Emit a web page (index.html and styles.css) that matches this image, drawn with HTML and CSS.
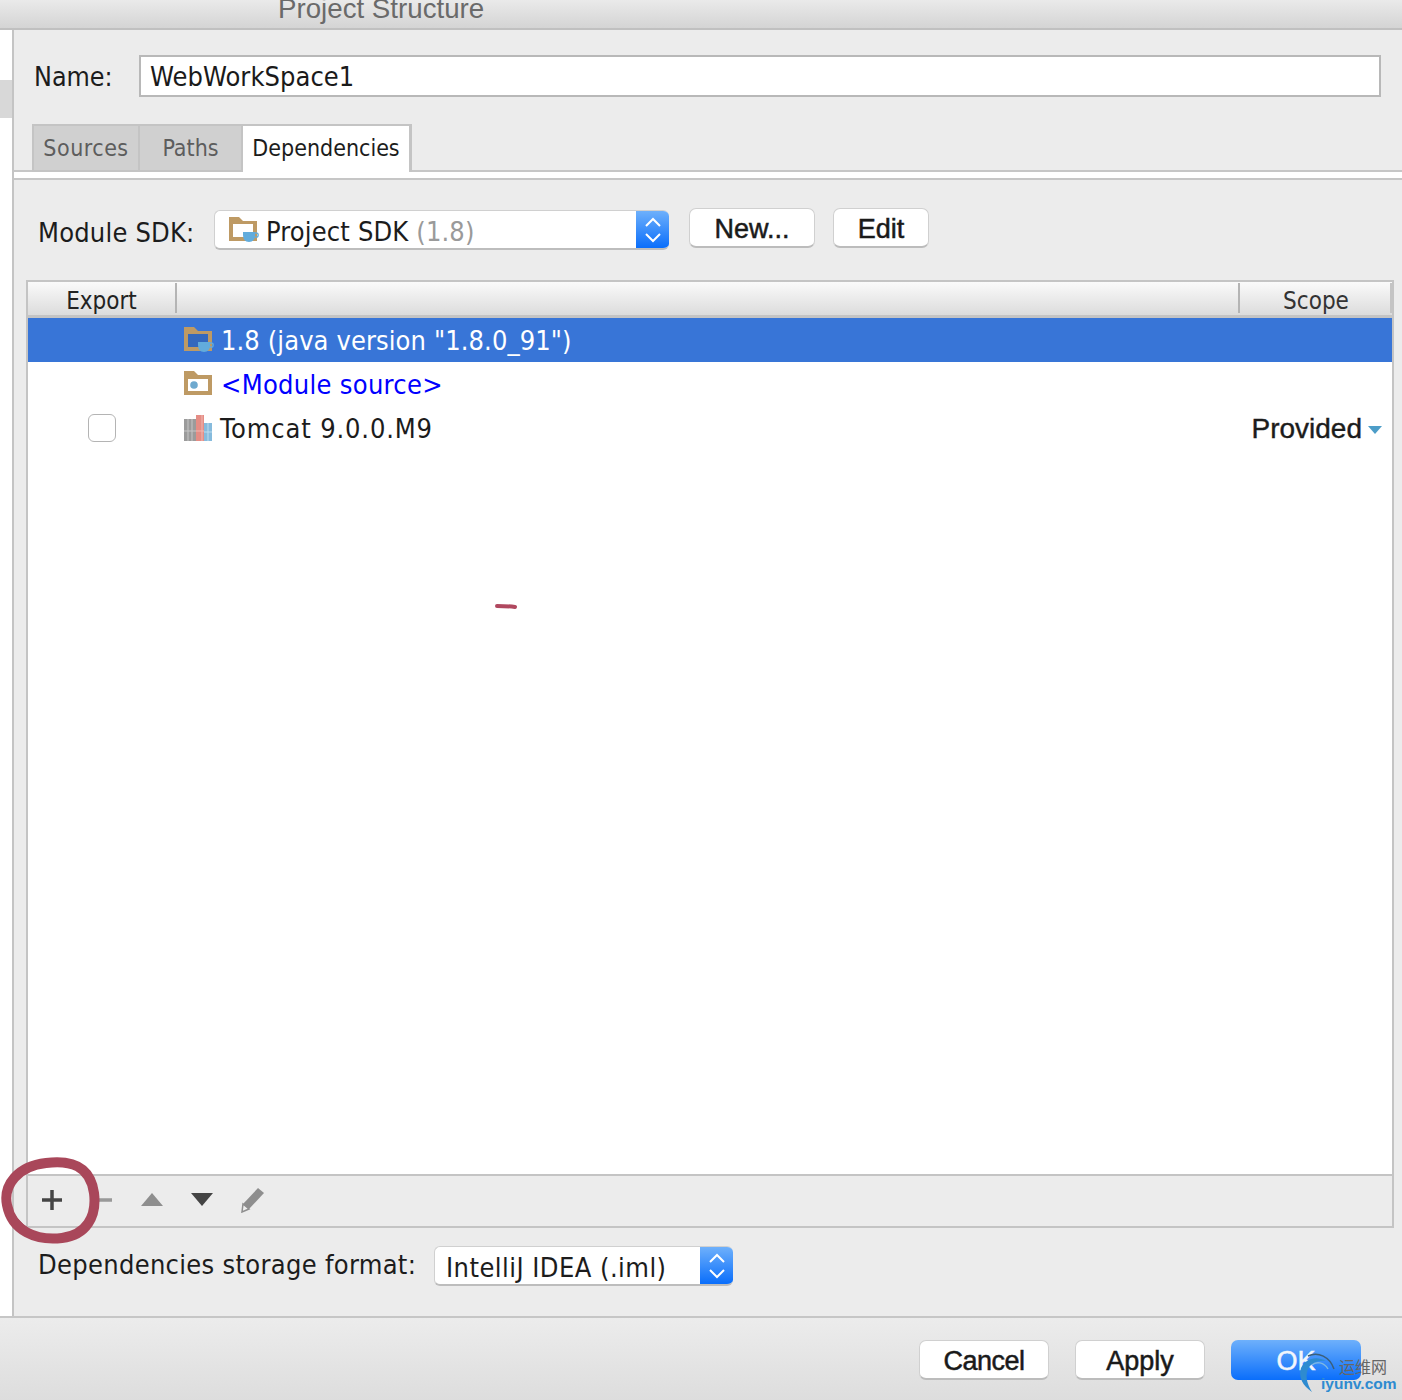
FILE: index.html
```html
<!DOCTYPE html>
<html lang="en">
<head>
<meta charset="utf-8">
<title>Project Structure</title>
<link rel="stylesheet" href="styles.css">
</head>
<body>
<div class="window">
  <header class="titlebar"><span class="title">Project Structure</span></header>
  <div class="main">
    <aside class="sidebar"><div class="side-item"></div></aside>
    <section class="content">
      <div class="name-row">
        <label class="name-label">Name:</label>
        <div class="name-input">WebWorkSpace1</div>
      </div>
      <div class="tabbar">
        <div class="tab tab-sources">Sources</div>
        <div class="tab tab-paths">Paths</div>
        <div class="tab tab-active">Dependencies</div>
      </div>
      <div class="tabstrip"></div>
      <div class="sdk-row">
        <span class="sdk-label">Module SDK:</span>
        <div class="select select-sdk">
          <svg class="sdk-icon" width="30" height="26" viewBox="0 0 30 26"><path d="M0 0h10l4 4h14v20H0z" fill="#BE9A64"/><rect x="4" y="7" width="20" height="13" fill="#fff"/><path d="M14 15h12v3q0 7-6 7t-6-7z" fill="#62ACDC"/><circle cx="27" cy="18" r="2.200" fill="none" stroke="#62ACDC" stroke-width="1.300"/></svg>
          <span class="select-text select-text-sdk">Project SDK <span class="muted">(1.8)</span></span>
          <span class="stepper"><svg width="16" height="28" viewBox="0 0 16 28"><path d="M1 10l7-7 7 7M1 18l7 7 7-7" fill="none" stroke="#fff" stroke-width="2"/></svg></span>
        </div>
        <button class="btn btn-new">New...</button>
        <button class="btn btn-edit">Edit</button>
      </div>
      <div class="table">
        <div class="thead">
          <div class="th th-export">Export</div>
          <div class="th th-fill"></div>
          <div class="th th-scope">Scope</div>
        </div>
        <div class="tbody">
          <div class="row row-selected">
            <div class="cell-export"></div>
            <svg class="row-icon" width="30" height="26" viewBox="0 0 30 26"><path d="M0 0h10l4 4h14v20H0z" fill="#BE9A64"/><rect x="4" y="7" width="20" height="13" fill="#3368BE"/><path d="M14 15h12v3q0 7-6 7t-6-7z" fill="#62ACDC"/><circle cx="27" cy="18" r="2.200" fill="none" stroke="#62ACDC" stroke-width="1.300"/></svg>
            <span class="row-text row-text-jdk">1.8 (java version "1.8.0_91")</span>
          </div>
          <div class="row">
            <div class="cell-export"></div>
            <svg class="row-icon" width="30" height="26" viewBox="0 0 30 26"><path d="M0 0h10l4 4h14v20H0z" fill="#BE9A64"/><rect x="4" y="8" width="20" height="12" fill="#fff"/><circle cx="10" cy="14" r="3.800" fill="#6EA9CF"/></svg>
            <span class="row-text link">&lt;Module source&gt;</span>
          </div>
          <div class="row">
            <div class="cell-export"><span class="checkbox"></span></div>
            <svg class="row-icon" width="30" height="26" viewBox="0 0 30 26"><rect x="0" y="4" width="12" height="22" fill="#9B9B9B"/><path d="M4 4v22M8 4v22M0 16h12" stroke="#C6C6C6" stroke-width="1"/><rect x="12" y="0" width="8" height="26" fill="#E58D85"/><path d="M18 0v26M12 16h8" stroke="#F0B8B2" stroke-width="1"/><rect x="20" y="8" width="8" height="18" fill="#86BBDD"/><path d="M24 8v18M20 17h8" stroke="#BCDCEF" stroke-width="1"/></svg>
            <span class="row-text row-text-tomcat">Tomcat 9.0.0.M9</span>
            <span class="scope-value">Provided<svg class="scope-caret" width="14" height="8" viewBox="0 0 14 8"><path d="M0 0h14L7 8z" fill="#4C9DC8"/></svg></span>
          </div>
        </div>
        <div class="toolbar">
          <span class="tool"><svg width="22" height="22" viewBox="0 0 22 22"><path d="M11 1v20M1 11h20" stroke="#444" stroke-width="3.500"/></svg></span>
          <span class="tool"><svg width="22" height="22" viewBox="0 0 22 22"><path d="M1 11h20" stroke="#999" stroke-width="3.500"/></svg></span>
          <span class="tool"><svg width="22" height="14" viewBox="0 0 22 14"><path d="M11 0l11 13H0z" fill="#8e8e8e"/></svg></span>
          <span class="tool"><svg width="22" height="14" viewBox="0 0 22 14"><path d="M0 0h22L11 13z" fill="#444"/></svg></span>
          <span class="tool"><svg width="26" height="26" viewBox="0 0 26 26"><path d="M19 1l6 5-15 16-7 2 1-7z" fill="#8e8e8e"/><path d="M4 17l6 5-7 3z" fill="#eee" stroke="#8e8e8e" stroke-width="1.500"/></svg></span>
        </div>
      </div>
      <div class="format-row">
        <span class="format-label">Dependencies storage format:</span>
        <div class="select select-format">
          <span class="select-text select-text-format">IntelliJ IDEA (.iml)</span>
          <span class="stepper"><svg width="16" height="28" viewBox="0 0 16 28"><path d="M1 10l7-7 7 7M1 18l7 7 7-7" fill="none" stroke="#fff" stroke-width="2"/></svg></span>
        </div>
      </div>
    </section>
  </div>
  <footer class="footer">
    <button class="btn btn-footer btn-cancel">Cancel</button>
    <button class="btn btn-footer">Apply</button>
    <button class="btn btn-footer btn-primary">OK</button>
  </footer>

  <svg class="annotation-circle" width="106" height="90" viewBox="0 0 106 90"><path d="M46 6C70 3 90 8 94 36c3 24-8 42-32 45C36 84 12 74 7 48 3 28 18 9 46 6z" fill="none" stroke="#A9475A" stroke-width="10"/><path d="M12 58c8 12 20 20 34 24" fill="none" stroke="#A9475A" stroke-width="5"/></svg>
  <svg class="annotation-dash" width="22" height="8" viewBox="0 0 22 8"><path d="M2 3c6 0 12 0 18 1" stroke="#B0485F" stroke-width="4" stroke-linecap="round" fill="none"/></svg>
  <div class="watermark">
    <svg class="wm-swirl" width="40" height="42" viewBox="0 0 40 42"><path d="M36 17C32 5 20-1 10 4" fill="none" stroke="#3b5f7a" stroke-width="1.500"/><path d="M28 9C18 3 7 7 3 16c-3 9 2 18 11 24C9 32 7 24 10 17c3-6 10-9 18-8z" fill="#2E8BD0"/><path d="M30 17C26 10 18 9 14 13" fill="none" stroke="#7DB8E3" stroke-width="1.500"/></svg>
    <span class="wm-cn">运维网</span>
    <span class="wm-en">iyunv.com</span>
  </div>
</div>
</body>
</html>
```

FILE: styles.css
```css
* { box-sizing: border-box; }
html, body { margin: 0; padding: 0; }
body { font-family: "DejaVu Sans", "Open Sans", sans-serif; font-stretch: condensed; color: #1c1c1c; background: #ececec; }

.window { position: relative; width: 1402px; height: 1400px; overflow: hidden; display: flex; flex-direction: column; background: #ececec; }

.titlebar { height: 30px; flex: none; padding-left: 278px; overflow: hidden; border-bottom: 2px solid #c0c0c0; background: linear-gradient(#eaeaea, #d4d4d4); }
.title { display: block; margin-top: -9px; font: 27.700px/36px "Liberation Sans", sans-serif; color: #6a6a6a; }

.main { flex: 1; display: flex; min-height: 0; }
.sidebar { width: 14px; flex: none; background: #fff; border-right: 2px solid #c4c4c4; padding-top: 50px; }
.side-item { height: 38px; background: #d8d8d8; }

.content { flex: 1; min-width: 0; display: flex; flex-direction: column; }

.name-row { display: flex; align-items: center; margin: 25px 21px 0 20px; height: 42px; }
.name-label { width: 105px; flex: none; font-size: 26.600px; }
.name-input { flex: 1; height: 42px; border: 2px solid #b8b8b8; background: #fff; padding-left: 9px; font-size: 27px; line-height: 39px; letter-spacing: 0.050px; color: #1a1a1a; }

.tabbar { display: flex; margin-top: 27px; padding-left: 18px; height: 48px; border-bottom: 2px solid #c6c6c6; }
.tab { height: 48px; font-size: 23px; line-height: 44px; text-align: center; color: #5d5d5d; background: #d0d0d0; border: 2px solid #c4c4c4; border-right-width: 0; }
.tab-sources { width: 106px; letter-spacing: 0.500px; }
.tab-paths { width: 103px; }
.tab-active { width: 171px; color: #1c1c1c; background: #fff; border-bottom: 0; border-right-width: 3px; height: 48px; }
.tabstrip { height: 8px; flex: none; background: #fff; border-bottom: 2px solid #c6c6c6; }

.sdk-row { display: flex; align-items: flex-start; margin: 28px 0 0 24px; height: 42px; }
.sdk-label { width: 176px; flex: none; margin-top: 5px; font-size: 27px; letter-spacing: 0.200px; line-height: 40px; }
.select { position: relative; display: flex; align-items: center; height: 40px; background: #fff; border-radius: 6px; border: 1px solid #d0d0d0; border-right: 0; border-bottom: 2px solid #bdbdbd; overflow: hidden; }
.select-sdk { width: 455px; margin-top: 2px; padding-left: 14px; }
.select-format { width: 299px; padding-left: 11px; }
.select-text { font-size: 27px; white-space: nowrap; padding-top: 3px; }
.select-text-sdk { letter-spacing: 0.150px; }
.select-text-format { letter-spacing: 0.450px; }
.muted { color: #9a9a9a; }
.sdk-icon { flex: none; margin-right: 7px; }
.stepper { position: absolute; top: 0; right: 0; bottom: 0; width: 33px; display: flex; align-items: center; justify-content: center; background: linear-gradient(#6eb0fb, #0a6efb); }

.btn { height: 40px; border: 1px solid #d0d0d0; border-bottom: 2px solid #bcbcbc; border-radius: 7px; background: #fff; color: #1a1a1a; font: 27px/1 "Liberation Sans", sans-serif; -webkit-text-stroke: 0.500px #1a1a1a; padding: 3px 0 0; }
.btn-new { width: 126px; margin-left: 20px; }
.btn-edit { width: 96px; margin-left: 18px; }
.btn-cancel { letter-spacing: -0.500px; }

.table { flex: 1; min-height: 0; margin: 30px 8px 0 12px; display: flex; flex-direction: column; border: 2px solid #c4c4c4; background: #fff; }
.thead { display: flex; flex: none; height: 36px; border-bottom: 3px solid #c4c4c4; background: linear-gradient(#fafafa, #dcdcdc); }
.th { font-size: 24px; line-height: 37px; text-align: center; height: 30px; margin-top: 1px; color: #222; }
.th-export { width: 149px; border-right: 2px solid #b4b4b4; }
.th-fill { flex: 1; border-right: 2px solid #b4b4b4; }
.th-scope { width: 152px; padding-left: 2px; border-right: 2px solid #c4c4c4; color: #333; }

.tbody { flex: 1; min-height: 0; }
.row { display: flex; align-items: center; height: 44px; }
.row-selected { background: #3875d7; color: #fff; }
.cell-export { width: 156px; flex: none; display: flex; justify-content: center; padding-right: 10px; padding-left: 2px; }
.row-icon { flex: none; margin-right: 7px; }
.row-text { font-size: 27px; white-space: nowrap; padding-top: 1px; }
.row-text-jdk { letter-spacing: 0.100px; }
.row-text-tomcat { margin-left: -1px; letter-spacing: 0.850px; }
.link { color: #0000ff; letter-spacing: 0.300px; }
.checkbox { display: block; width: 28px; height: 28px; border-radius: 6px; border: 1px solid #b4b4b4; background: #fff; }
.scope-value { margin-left: auto; margin-right: 10px; padding-top: 1px; display: flex; align-items: center; font: 28px "Liberation Sans", sans-serif; -webkit-text-stroke: 0.400px #1c1c1c; }
.scope-caret { margin-left: 6px; margin-top: 2px; }

.toolbar { flex: none; height: 52px; display: flex; align-items: center; padding-bottom: 2px; border-top: 2px solid #c4c4c4; background: #ececec; }
.tool { width: 50px; flex: none; display: flex; align-items: center; justify-content: center; }
.tool:first-child { margin-left: -1px; }

.format-row { display: flex; align-items: center; margin: 18px 0 30px 24px; height: 40px; }
.format-label { width: 396px; flex: none; margin-top: -4px; font-size: 27px; letter-spacing: 0.300px; }

.footer { height: 84px; flex: none; display: flex; justify-content: flex-end; align-items: flex-start; gap: 26px; padding: 22px 41px 0 0; border-top: 2px solid #c6c6c6; background: linear-gradient(#ececec, #dddddd); }
.btn-footer { width: 130px; }
.btn-primary { border: 0; background: linear-gradient(#6eb0fb, #0a6efb); color: #f2f6fc; -webkit-text-stroke: 0.500px #f2f6fc; }

.annotation-circle { position: absolute; left: 0; top: 1157px; }
.annotation-dash { position: absolute; left: 495px; top: 603px; }

.watermark { position: absolute; left: 1298px; top: 1352px; width: 104px; height: 44px; }
.wm-swirl { position: absolute; left: 0; top: 0; }
.wm-cn { position: absolute; left: 41px; top: 4px; font: 16px/20px "Noto Sans CJK SC", sans-serif; color: #666; }
.wm-en { position: absolute; left: 23px; top: 23px; font: bold 15.500px/18px "Liberation Sans", sans-serif; color: #2e8bd0; }
```
